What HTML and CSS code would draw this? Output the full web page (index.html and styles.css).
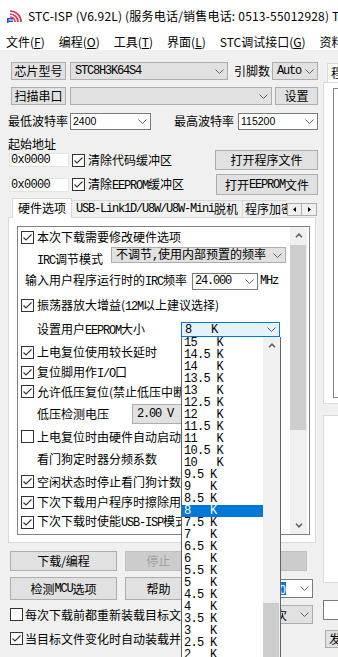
FILE: index.html
```html
<!DOCTYPE html>
<html lang="zh">
<head>
<meta charset="utf-8">
<title>STC-ISP</title>
<link rel="stylesheet" href="styles.css">
</head>
<body>
<div class="titlebar">
  <svg class="appicon" viewBox="0 0 16 16">
    <path class="arc" d="M4 9a5 5 0 0 1 5 5"/>
    <path class="arc" d="M4 6a8 8 0 0 1 8 8"/>
    <path class="arc" d="M4 3a11 11 0 0 1 11 11"/>
    <rect class="blue" x="1" y="10" width="6" height="1.5"/>
    <rect class="blue" x="1" y="12.5" width="6" height="1.5"/>
    <rect class="blue" x="1" y="10" width="1.5" height="5"/>
  </svg>
  <span class="title">STC-ISP (V6.92L) (服务电话/销售电话: 0513-55012928) T</span>
</div>
<div class="menubar">
  <span>文件(<u>F</u>)</span><span>编程(<u>O</u>)</span><span>工具(<u>T</u>)</span><span>界面(<u>L</u>)</span><span>STC调试接口(<u>G</u>)</span><span>资料</span>
</div>
<div class="client">
  <div class="left">
    <div class="row r1">
      <div class="btn b-chip">芯片型号</div>
      <div class="combo gray c-chip"><span class="m">STC8H3K64S4</span><svg class="chev" viewBox="0 0 9 5"><path d="M0.5 0.5L4.5 4.5L8.5 0.5"/></svg></div>
      <span class="l-pins">引脚数</span>
      <div class="combo gray c-auto"><span class="m">Auto</span><svg class="chev" viewBox="0 0 9 5"><path d="M0.5 0.5L4.5 4.5L8.5 0.5"/></svg></div>
    </div>
    <div class="row r2">
      <div class="btn b-chip">扫描串口</div>
      <div class="combo gray c-port"><span></span><svg class="chev" viewBox="0 0 9 5"><path d="M0.5 0.5L4.5 4.5L8.5 0.5"/></svg></div>
      <div class="btn b-set">设置</div>
    </div>
    <div class="row r3">
      <span class="l-baud">最低波特率</span>
      <div class="combo c-baud1"><span class="num">2400</span><svg class="chev" viewBox="0 0 9 5"><path d="M0.5 0.5L4.5 4.5L8.5 0.5"/></svg></div>
      <span class="l-baud2">最高波特率</span>
      <div class="combo c-baud2"><span class="num">115200</span><svg class="chev" viewBox="0 0 9 5"><path d="M0.5 0.5L4.5 4.5L8.5 0.5"/></svg></div>
    </div>
    <div class="row r4">起始地址</div>
    <div class="row r5">
      <div class="edit e-addr"><span class="m m65">0x0000</span></div>
      <span class="cb"><svg viewBox="0 0 11 11"><path d="M1.5 5.5L4 8L9.5 2.5"/></svg></span>
      <span class="lbl-cb">清除代码缓冲区</span>
      <div class="btn b-open">打开程序文件</div>
    </div>
    <div class="row r6">
      <div class="edit e-addr"><span class="m m65">0x0000</span></div>
      <span class="cb"><svg viewBox="0 0 11 11"><path d="M1.5 5.5L4 8L9.5 2.5"/></svg></span>
      <span class="lbl-cb">清除<span class="m">EEPROM</span>缓冲区</span>
      <div class="btn b-open2">打开<span class="m">EEPROM</span>文件</div>
    </div>
    <div class="tabs">
      <div class="tabwrap">
        <div class="tab sel">硬件选项</div>
        <div class="tab t2"><span class="m">USB-Link1D/U8W/U8W-Mini</span>脱机</div>
        <div class="tab t3">程序加密后传输</div>
      </div>
      <div class="tabarrows">
        <div class="tarr"><svg viewBox="0 0 3 5"><path d="M3 0L0 2.5L3 5Z"/></svg></div>
        <div class="tarr"><svg viewBox="0 0 3 5"><path d="M0 0L3 2.5L0 5Z"/></svg></div>
      </div>
    </div>
    <div class="page">
      <div class="opts">
        <div class="ocontent">
          <div class="orow h20"><span class="cb"><svg viewBox="0 0 11 11"><path d="M1.5 5.5L4 8L9.5 2.5"/></svg></span><span class="ol">本次下载需要修改硬件选项</span></div>
          <div class="orow h22 top"><span class="ind irc"><span class="m">IRC</span>调节模式</span><div class="combo gray c-irc"><span>不调节<span class="m">,</span>使用内部预置的频率</span><svg class="chev" viewBox="0 0 9 5"><path d="M0.5 0.5L4.5 4.5L8.5 0.5"/></svg></div></div>
          <div class="orow h24"><span class="ind2">输入用户程序运行时的<span class="m">IRC</span>频率</span><div class="combo c-freq"><span class="m">24.000</span><svg class="chev" viewBox="0 0 9 5"><path d="M0.5 0.5L4.5 4.5L8.5 0.5"/></svg></div><span class="m mhz">MHz</span></div>
          <div class="orow h25"><span class="cb"><svg viewBox="0 0 11 11"><path d="M1.5 5.5L4 8L9.5 2.5"/></svg></span><span class="ol">振荡器放大增益(<span class="m">12M</span>以上建议选择)</span></div>
          <div class="orow h23"><span class="ind">设置用户<span class="m">EEPROM</span>大小</span><div class="combo focus c-ee"><span class="m m65 pre">8   K</span><svg class="chev" viewBox="0 0 9 5"><path d="M0.5 0.5L4.5 4.5L8.5 0.5"/></svg></div></div>
          <div class="orow h22"><span class="cb"><svg viewBox="0 0 11 11"><path d="M1.5 5.5L4 8L9.5 2.5"/></svg></span><span class="ol">上电复位使用较长延时</span></div>
          <div class="orow h19"><span class="cb"><svg viewBox="0 0 11 11"><path d="M1.5 5.5L4 8L9.5 2.5"/></svg></span><span class="ol">复位脚用作<span class="m">I/O</span>口</span></div>
          <div class="orow h19"><span class="cb"><svg viewBox="0 0 11 11"><path d="M1.5 5.5L4 8L9.5 2.5"/></svg></span><span class="ol">允许低压复位(禁止低压中断)</span></div>
          <div class="orow h25"><span class="ind">低压检测电压</span><div class="combo gray c-lv"><span class="m pre">2.00 V</span><svg class="chev" viewBox="0 0 9 5"><path d="M0.5 0.5L4.5 4.5L8.5 0.5"/></svg></div></div>
          <div class="orow h21"><span class="cb"></span><span class="ol">上电复位时由硬件自动启动看门狗</span></div>
          <div class="orow h23"><span class="ind">看门狗定时器分频系数</span></div>
          <div class="orow h23"><span class="cb"><svg viewBox="0 0 11 11"><path d="M1.5 5.5L4 8L9.5 2.5"/></svg></span><span class="ol">空闲状态时停止看门狗计数</span></div>
          <div class="orow h19"><span class="cb"><svg viewBox="0 0 11 11"><path d="M1.5 5.5L4 8L9.5 2.5"/></svg></span><span class="ol">下次下载用户程序时擦除用户<span class="m">EEPROM</span>区</span></div>
          <div class="orow h20"><span class="cb"><svg viewBox="0 0 11 11"><path d="M1.5 5.5L4 8L9.5 2.5"/></svg></span><span class="ol">下次下载时使能<span class="m">USB-ISP</span>模式</span></div>
        </div>
        <div class="vscroll">
          <div class="sbtn"><svg class="sarr" viewBox="0 0 8 5"><path d="M1 4.2L4 1.2L7 4.2"/></svg></div>
          <div class="strack"><div class="thumb"></div></div>
          <div class="sbtn"><svg class="sarr" viewBox="0 0 8 5"><path d="M1 0.8L4 3.8L7 0.8"/></svg></div>
        </div>
      </div>
    </div>
    <div class="row brow1">
      <div class="btn b-dl">下载/编程</div>
      <div class="btn dis b-stop">停止</div>
      <div class="btn dis b-x">重复编程</div>
    </div>
    <div class="row brow2">
      <div class="btn b-mcu">检测<span class="m">MCU</span>选项</div>
      <div class="btn b-help">帮助</div>
      <div class="combo c-x"><span class="selx">0</span><svg class="chev" viewBox="0 0 9 5"><path d="M0.5 0.5L4.5 4.5L8.5 0.5"/></svg></div>
    </div>
    <div class="row crow">
      <span class="cb cb2"></span>
      <span class="clbl">每次下载前都重新装载目标文件</span>
      <div class="combo gray c-x2"><span class="xtxt">次</span><svg class="chev" viewBox="0 0 9 5"><path d="M0.5 0.5L4.5 4.5L8.5 0.5"/></svg></div>
    </div>
    <div class="row crow">
      <span class="cb cb2"><svg viewBox="0 0 11 11"><path d="M1.5 5.5L4 8L9.5 2.5"/></svg></span>
      <span class="clbl">当目标文件变化时自动装载并发送下载命令</span>
    </div>
  </div>
  <div class="right">
    <div class="rtab">程</div>
    <div class="rpage"><div class="rbox"></div></div>
    <div class="rpage2"></div>
    <div class="rinput"></div>
    <div class="rbtn">发</div>
  </div>
</div>

<div class="dlist">
  <div class="ditems">
    <div class="ditem">15   K</div>
    <div class="ditem">14.5 K</div>
    <div class="ditem">14   K</div>
    <div class="ditem">13.5 K</div>
    <div class="ditem">13   K</div>
    <div class="ditem">12.5 K</div>
    <div class="ditem">12   K</div>
    <div class="ditem">11.5 K</div>
    <div class="ditem">11   K</div>
    <div class="ditem">10.5 K</div>
    <div class="ditem">10   K</div>
    <div class="ditem">9.5 K</div>
    <div class="ditem">9   K</div>
    <div class="ditem">8.5 K</div>
    <div class="ditem hl">8   K</div>
    <div class="ditem">7.5 K</div>
    <div class="ditem">7   K</div>
    <div class="ditem">6.5 K</div>
    <div class="ditem">6   K</div>
    <div class="ditem">5.5 K</div>
    <div class="ditem">5   K</div>
    <div class="ditem">4.5 K</div>
    <div class="ditem">4   K</div>
    <div class="ditem">3.5 K</div>
    <div class="ditem">3   K</div>
    <div class="ditem">2.5 K</div>
    <div class="ditem">2   K</div>
  </div>
  <div class="dscroll">
    <div class="sbtn"><svg class="sarr" viewBox="0 0 8 5"><path d="M1 4.2L4 1.2L7 4.2"/></svg></div>
    <div class="dtrack"><div class="dthumb"></div></div>
  </div>
</div>
</body>
</html>
```

FILE: styles.css
```css
*{box-sizing:border-box;margin:0;padding:0}
html,body{width:338px;height:657px;overflow:hidden}
body{position:relative;background:#f0f0f0;color:#000;font-family:"Noto Sans CJK SC","Noto Sans",sans-serif;font-size:12px;line-height:14px}
svg{display:block}
.m{font-family:"Liberation Mono",monospace;font-size:12px;letter-spacing:-1.2px}
.m65{letter-spacing:-0.7px}
.pre{white-space:pre}
.num{font-family:"Liberation Sans",sans-serif;font-size:10.5px}

.titlebar{height:32px;background:#fff;display:flex;align-items:center;padding-left:6px;white-space:nowrap;overflow:hidden}
.appicon{width:16px;height:16px;flex:none;margin-right:6px}
.appicon .arc{fill:none;stroke:#e4335a;stroke-width:1.7}
.appicon .blue{fill:#2a56c6}
.title{font-size:12px;line-height:16px;letter-spacing:0.2px}
.menubar{height:18px;background:#fff;display:flex;gap:14px;padding:3px 0 0 6px;white-space:nowrap;overflow:hidden}
.menubar span{line-height:14px;flex:none}

.client{display:flex;align-items:flex-start}
.left{width:310px;margin-left:8px;flex:none}
.right{width:60px;margin-left:5px;flex:none}

.row{display:flex;align-items:center;white-space:nowrap}
.btn{flex:none;display:flex;align-items:center;justify-content:center;background:#e1e1e1;border:1px solid #adadad;white-space:nowrap;overflow:hidden}
.btn.dis{color:#a0a0a0;background:#cccccc;border-color:#bfbfbf}
.combo{flex:none;display:flex;align-items:center;justify-content:space-between;background:#fff;border:1px solid #7a7a7a;padding-left:4px;white-space:nowrap;overflow:hidden}
.combo.gray{background:#e1e1e1;border-color:#adadad}
.combo.focus{background:#e5f1fb;border-color:#0078d7}
.chev{width:9px;height:5px;flex:none;margin-right:3px;fill:none;stroke:#606060;stroke-width:1}
.edit{flex:none;background:#fff;border:1px solid #e3e3e3;height:14px;display:flex;align-items:center;padding-left:1px;overflow:hidden}
.cb{flex:none;width:13px;height:13px;border:1px solid #333;background:#fff;display:flex;align-items:center;justify-content:center}
.cb svg{width:11px;height:11px;fill:none;stroke:#333;stroke-width:1.1}

.r1{margin-top:12px;height:18px}
.r2{margin-top:7px;height:18px}
.r3{margin-top:7px;height:18px}
.r4{margin-top:8px;height:12px;line-height:12px}
.r5{height:20px}
.r6{margin-top:4px;height:21px}
.b-chip{margin-left:3px;width:55px;height:18px}
.c-chip{margin-left:4px;width:158px;height:18px}
.l-pins{margin-left:6px;width:38px}
.c-auto{width:46px;height:18px}
.c-port{margin-left:4px;width:202px;height:18px}
.b-set{margin-left:3px;width:43px;height:18px}
.l-baud{width:62px}
.c-baud1{width:81px;height:17px;padding-left:2px}
.l-baud2{margin-left:23px;width:64px}
.c-baud2{width:80px;height:17px;padding-left:2px}
.e-addr{margin-left:1px;width:60px}
.r5 .cb,.r6 .cb{margin-left:3px}
.lbl-cb{margin-left:3px}
.b-open{margin-left:auto;width:103px;height:20px}
.b-open2{margin-left:auto;width:102px;height:21px}

.tabs{margin-top:3px;height:20px;display:flex;align-items:flex-end;padding-left:4px;margin-bottom:-1px;position:relative;z-index:1}
.tabwrap{width:275px;height:20px;display:flex;align-items:flex-start;overflow:hidden}
.tab{flex:none;height:17px;margin-top:2px;background:#f0f0f0;border:1px solid #d9d9d9;border-bottom:none;display:flex;align-items:center;padding-left:4px;white-space:nowrap}
.tab.sel{height:20px;margin-top:0;width:60px;background:#fff;justify-content:center;padding:0 0 2px}
.tab.t2{width:171px;border-left:none}
.tab.t3{width:80px;border-left:none;padding-left:2px}
.tabarrows{flex:none;display:flex;margin-bottom:2px}
.tarr{width:15px;height:13px;border:1px solid #adadad;background:#f0f0f0;display:flex;align-items:center;justify-content:center}
.tarr+.tarr{border-left:none}
.tarr svg{width:3px;height:5px;fill:#000}

.page{width:308px;height:326px;background:#fff;border:1px solid #d9d9d9;padding:8px 0 0 8px}
.opts{width:293px;height:309px;border:1px solid #828282;display:flex;padding-right:2px}
.ocontent{width:272px;flex:none;padding-left:3px;overflow:hidden}
.vscroll{width:17px;flex:none;display:flex;flex-direction:column}
.sbtn{height:17px;flex:none;display:flex;align-items:center;justify-content:center;background:#f0f0f0}
.sarr{width:8px;height:5px;fill:none;stroke:#606060;stroke-width:1.6}
.strack{flex:1;background:#f0f0f0}
.thumb{margin:1px 1px 0 0;height:185px;background:#cdcdcd}

.orow{display:flex;align-items:center;white-space:nowrap}
.orow.top{align-items:flex-start}
.ol{margin-left:3px}
.ind{margin-left:16px}
.ind2{margin-left:4px}
.irc{margin-top:5px}
.h19{height:19px}.h20{height:20px}.h21{height:21px}.h22{height:22px}.h23{height:23px}.h24{height:24px}.h25{height:25px}
.c-irc{margin-left:auto;margin-right:4px;width:175px;height:16px}
.c-freq{margin-left:auto;width:66px;height:17px;padding-left:2px}
.mhz{width:22px;margin-left:2px;margin-right:8px}
.c-ee{margin-left:auto;margin-right:10px;width:99px;height:15px;padding-left:3px}
.c-lv{margin-left:auto;margin-right:40px;width:118px;height:20px}

.brow1{margin-top:8px;height:20px}
.brow2{margin-top:6px;height:23px}
.b-dl{margin-left:2px;width:107px;height:20px}
.b-stop{margin-left:8px;width:67px;height:20px}
.b-x{margin-left:8px;width:107px;height:20px}
.b-mcu{margin-left:2px;width:107px;height:23px}
.b-help{margin-left:8px;width:67px;height:23px}
.c-x{margin-left:8px;width:113px;height:19px}
.selx{margin-left:auto;margin-right:14px;background:#0078d7;color:#fff;padding-left:4px;line-height:13px}
.crow{margin-top:5px;height:19px}
.cb2{margin-left:2px}
.clbl{margin-left:2px;width:170px;overflow:hidden}
.c-x2{margin-left:auto;margin-right:5px;width:100px;height:19px;border-color:#bfbfbf;background:#cccccc}
.xtxt{margin-left:auto;margin-right:13px}

.rtab{margin:13px 0 0 4px;width:40px;height:19px;background:#fff;border:1px solid #d9d9d9;border-bottom:none;padding-left:3px;line-height:17px}
.rpage{height:322px;background:#fff;border-left:1px solid #d9d9d9;border-top:1px solid #d9d9d9;border-bottom:1px solid #d9d9d9;padding:5px 0 0 9px}
.rbox{height:310px;border:1px solid #828282;border-right:none}
.rpage2{margin-top:11px;height:168px;background:#fff;border:1px solid #d9d9d9;border-right:none}
.rinput{margin-top:17px;height:20px;background:#fff;border:1px solid #7a7a7a;border-right:none}
.rbtn{margin:10px 0 0 2px;height:18px;background:#e1e1e1;border:1px solid #adadad;border-right:none;padding-left:3px;line-height:16px}

.dlist{position:absolute;left:181px;top:337px;width:100px;height:330px;background:#fff;border:1px solid #646464;border-top:none;display:flex;z-index:5}
.ditems{width:81px;flex:none}
.ditem{height:12px;line-height:12px;padding-left:2px;white-space:pre;font-family:"Liberation Mono",monospace;font-size:12px;letter-spacing:-0.7px}
.ditem.hl{background:#0078d7;color:#fff}
.dscroll{width:17px;flex:none;display:flex;flex-direction:column;background:#f0f0f0}
.dtrack{flex:1}
.dthumb{margin-top:249px;height:80px;background:#cdcdcd;margin-right:1px}
```
